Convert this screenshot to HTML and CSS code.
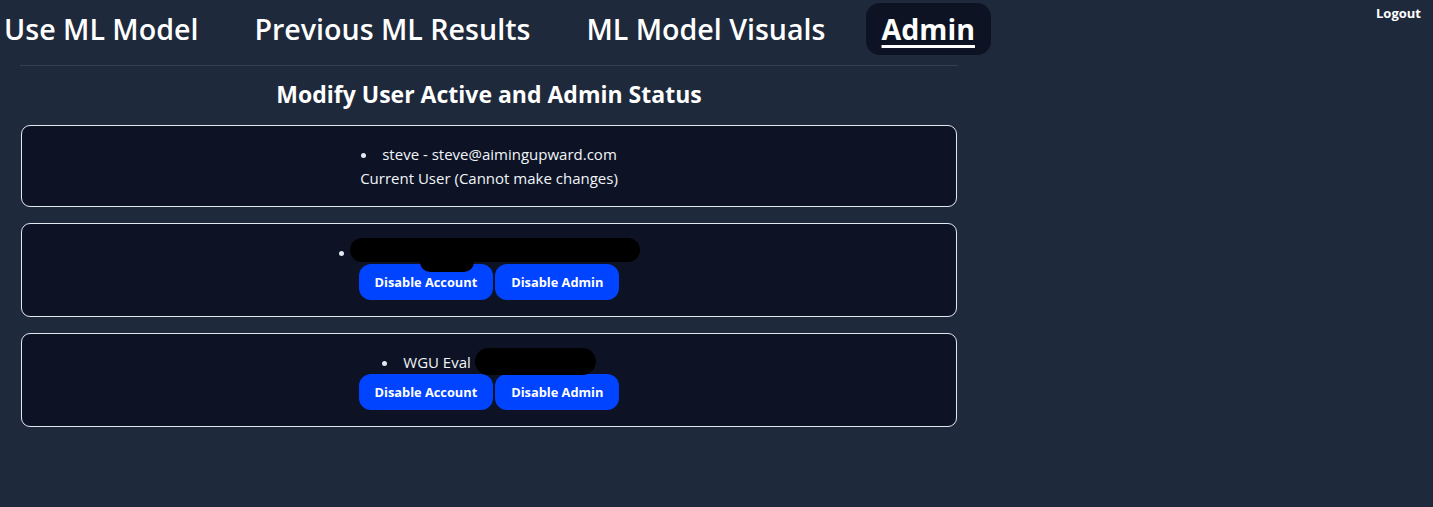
FILE: index.html
```html
<!DOCTYPE html>
<html lang="en">
<head>
<meta charset="utf-8">
<title>Admin</title>
<link rel="stylesheet" href="styles.css">
</head>
<body>
<header class="topbar">
  <nav class="nav">
    <a class="nav-item" href="#">Use ML Model</a>
    <a class="nav-item" href="#">Previous ML Results</a>
    <a class="nav-item" href="#">ML Model Visuals</a>
    <a class="nav-item active" href="#">Admin</a>
  </nav>
  <a class="logout" href="#">Logout</a>
</header>
<main class="main">
  <hr class="divider">
  <h1 class="title">Modify User Active and Admin Status</h1>
  <div class="cards">
    <section class="card">
      <ul class="user-list"><li>steve - steve@aimingupward.com</li></ul>
      <p class="note">Current User (Cannot make changes)</p>
    </section>
    <section class="card">
      <ul class="user-list"><li><span class="redact redact-long"><span class="redact-drop"></span></span></li></ul>
      <div class="actions">
        <button class="btn">Disable Account</button>
        <button class="btn">Disable Admin</button>
      </div>
    </section>
    <section class="card">
      <ul class="user-list"><li>WGU Eval <span class="redact redact-short"></span></li></ul>
      <div class="actions">
        <button class="btn">Disable Account</button>
        <button class="btn">Disable Admin</button>
      </div>
    </section>
  </div>
</main>
</body>
</html>
```
FILE: styles.css
```css
* { box-sizing: border-box; }
html, body { margin: 0; padding: 0; }
body {
  background: #1e293b;
  color: #ffffff;
  font-family: "Open Sans", "Noto Sans", "DejaVu Sans", sans-serif;
  min-height: 507px;
}
.topbar {
  display: flex;
  justify-content: space-between;
  align-items: flex-start;
}
.nav {
  display: flex;
  align-items: center;
  gap: 24px;
  padding-top: 3px;
  margin-left: -12px;
}
.nav-item {
  color: #ffffff;
  text-decoration: none;
  font-size: 28.6px;
  font-weight: 600;
  line-height: 52px;
  padding: 0 16px;
  border-radius: 14px;
}
.nav-item.active {
  background: #0d1323;
  font-weight: 700;
  text-decoration: underline;
  text-decoration-thickness: 3px;
  text-underline-offset: 5px;
}
.logout {
  color: #ffffff;
  text-decoration: none;
  font-size: 13px;
  font-weight: 700;
  padding: 4px 12px 0 0;
}
.main {
  width: 938px;
  margin-left: 20px;
}
.divider {
  border: 0;
  border-top: 1px solid #334155;
  margin: 10px 0 0 0;
}
.title {
  text-align: center;
  font-size: 23px;
  font-weight: 700;
  margin: 13px 0 16px 0;
  line-height: 30px;
}
.cards {
  display: flex;
  flex-direction: column;
  gap: 16px;
  width: 936px;
  margin-left: 1px;
}
.card {
  background: #0d1325;
  border: 1px solid #e2e8f0;
  border-radius: 9px;
  padding: 16px;
  text-align: center;
  font-size: 15px;
  line-height: 24px;
  color: #f1f5f9;
}
.user-list {
  list-style: disc inside;
  margin: 0;
  padding: 0;
}
.user-list li::marker { color: #e2e8f0; }
.note { margin: 0; }
.redact {
  display: inline-block;
  background: #000;
  border-radius: 12px;
  vertical-align: top;
  position: relative;
}
.redact-long {
  width: 290px;
  height: 24px;
  margin-left: -10px;
  margin-top: -2px;
}
.redact-drop {
  position: absolute;
  left: 70px;
  top: 14px;
  width: 54px;
  height: 20px;
  background: #000;
  border-radius: 10px;
}
.redact-short {
  width: 121px;
  height: 27px;
  border-radius: 14px;
  margin-top: -2px;
  margin-bottom: -3px;
}
.actions {
  display: flex;
  justify-content: center;
  gap: 2px;
}
.btn {
  background: #0044ff;
  color: #ffffff;
  border: 0;
  border-radius: 12px;
  font-family: inherit;
  font-size: 12.8px;
  font-weight: 700;
  height: 36px;
  padding: 0 16px;
  cursor: pointer;
}
```
